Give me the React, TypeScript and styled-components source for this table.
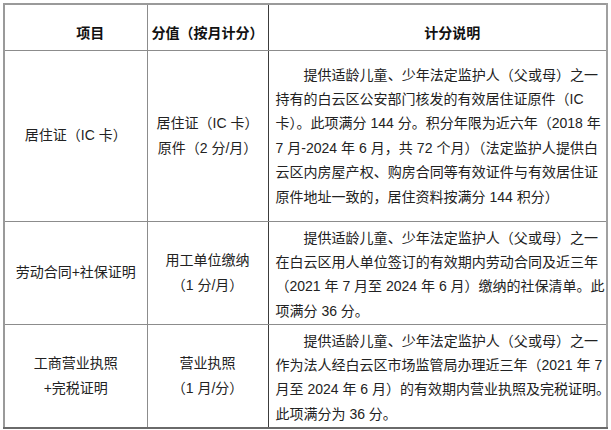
import React from "react";
import styled, { createGlobalStyle } from "styled-components";

// 积分表：每行一项材料，说明按原文逐行排版
interface ScoreRow {
    item: string[];
    value: string[];
    notes: string[];
    ragged?: number[]; // 不两端对齐的行
    height: number;
    padTop: number;
}

const rows: ScoreRow[] = [
    {
        item: ["居住证（IC 卡）"],
        value: ["居住证（IC 卡）", "原件（2 分/月）"],
        notes: [
            "提供适龄儿童、少年法定监护人（父或母）之一",
            "持有的白云区公安部门核发的有效居住证原件（IC",
            "卡）。此项满分 144 分。积分年限为近六年（2018 年",
            "7 月-2024 年 6 月，共 72 个月）（法定监护人提供白",
            "云区内房屋产权、购房合同等有效证件与有效居住证",
            "原件地址一致的，居住资料按满分 144 积分）",
        ],
        ragged: [1],
        height: 171,
        padTop: 12,
    },
    {
        item: ["劳动合同+社保证明"],
        value: ["用工单位缴纳", "（1 分/月）"],
        notes: [
            "提供适龄儿童、少年法定监护人（父或母）之一",
            "在白云区用人单位签订的有效期内劳动合同及近三年",
            "（2021 年 7 月至 2024 年 6 月）缴纳的社保清单。此",
            "项满分 36 分。",
        ],
        height: 103,
        padTop: 4,
    },
    {
        item: ["工商营业执照", "+完税证明"],
        value: ["营业执照", "（1 月/分）"],
        notes: [
            "提供适龄儿童、少年法定监护人（父或母）之一",
            "作为法人经白云区市场监管局办理近三年（2021 年 7",
            "月至 2024 年 6 月）的有效期内营业执照及完税证明。",
            "此项满分为 36 分。",
        ],
        height: 104,
        padTop: 4,
    },
];

const GlobalStyle = createGlobalStyle`
    body {
        margin: 0;
        background: #ffffff;
        font-family: "Liberation Sans", "Noto Sans CJK SC", sans-serif;
        color: #222222;
    }
`;

const Page = styled.div`
    padding: 3px 0 0 3px;
`;

const Table = styled.table`
    width: 603px;
    border-collapse: collapse;
    table-layout: fixed;
    font-size: 14px;
    border-top: 2px solid #9a9a9a;
    border-left: 2px solid #9a9a9a;
    border-right: 2px solid #a0a0a0;
    border-bottom: 2px solid #6a6a6a;
`;

const Row = styled.tr<{ $height: number }>`
    height: ${(p) => p.$height}px;
`;

const HeadCell = styled.th<{ $shift?: number; $dark?: boolean }>`
    font-weight: bold;
    text-align: center;
    vertical-align: bottom;
    padding: 0 0 5px ${(p) => p.$shift ?? 0}px;
    line-height: 24px;
    color: #111111;
    border: 1px solid #8c8c8c;
    border-right-color: ${(p) => (p.$dark ? "#3c3c3c" : "#8c8c8c")};
`;

const CenterCell = styled.td<{ $dark?: boolean }>`
    text-align: center;
    vertical-align: middle;
    padding: 0 4px;
    line-height: 25px;
    border: 1px solid #8c8c8c;
    border-right-color: ${(p) => (p.$dark ? "#3c3c3c" : "#8c8c8c")};
`;

const NotesCell = styled.td<{ $padTop: number }>`
    vertical-align: top;
    padding: ${(p) => p.$padTop}px 8px 0 7px;
    line-height: 24.4px;
    border: 1px solid #8c8c8c;
`;

const Line = styled.div<{ $indent?: boolean; $ragged?: boolean }>`
    white-space: nowrap;
    text-align: ${(p) => (p.$ragged ? "left" : "justify")};
    text-align-last: ${(p) => (p.$ragged ? "left" : "justify")};
    padding-left: ${(p) => (p.$indent ? 28 : 0)}px;
`;

const App: React.FC = () => {
    return (
        <Page>
            <GlobalStyle />
            <Table>
                <colgroup>
                    <col style={{ width: 143 }} />
                    <col style={{ width: 121 }} />
                    <col style={{ width: 339 }} />
                </colgroup>
                <thead>
                    <Row $height={46}>
                        <HeadCell $shift={29}>项目</HeadCell>
                        <HeadCell $dark>分值（按月计分）</HeadCell>
                        <HeadCell $shift={30}>计分说明</HeadCell>
                    </Row>
                </thead>
                <tbody>
                    {rows.map((row, i) => (
                        <Row key={i} $height={row.height}>
                            <CenterCell>
                                {row.item.map((t, k) => (
                                    <div key={k}>{t}</div>
                                ))}
                            </CenterCell>
                            <CenterCell $dark>
                                {row.value.map((t, k) => (
                                    <div key={k}>{t}</div>
                                ))}
                            </CenterCell>
                            <NotesCell $padTop={row.padTop}>
                                {row.notes.map((t, k) => (
                                    <Line
                                        key={k}
                                        $indent={k === 0}
                                        $ragged={
                                            k === row.notes.length - 1 ||
                                            (row.ragged ?? []).includes(k)
                                        }
                                    >
                                        {t}
                                    </Line>
                                ))}
                            </NotesCell>
                        </Row>
                    ))}
                </tbody>
            </Table>
        </Page>
    );
};

export default App;
